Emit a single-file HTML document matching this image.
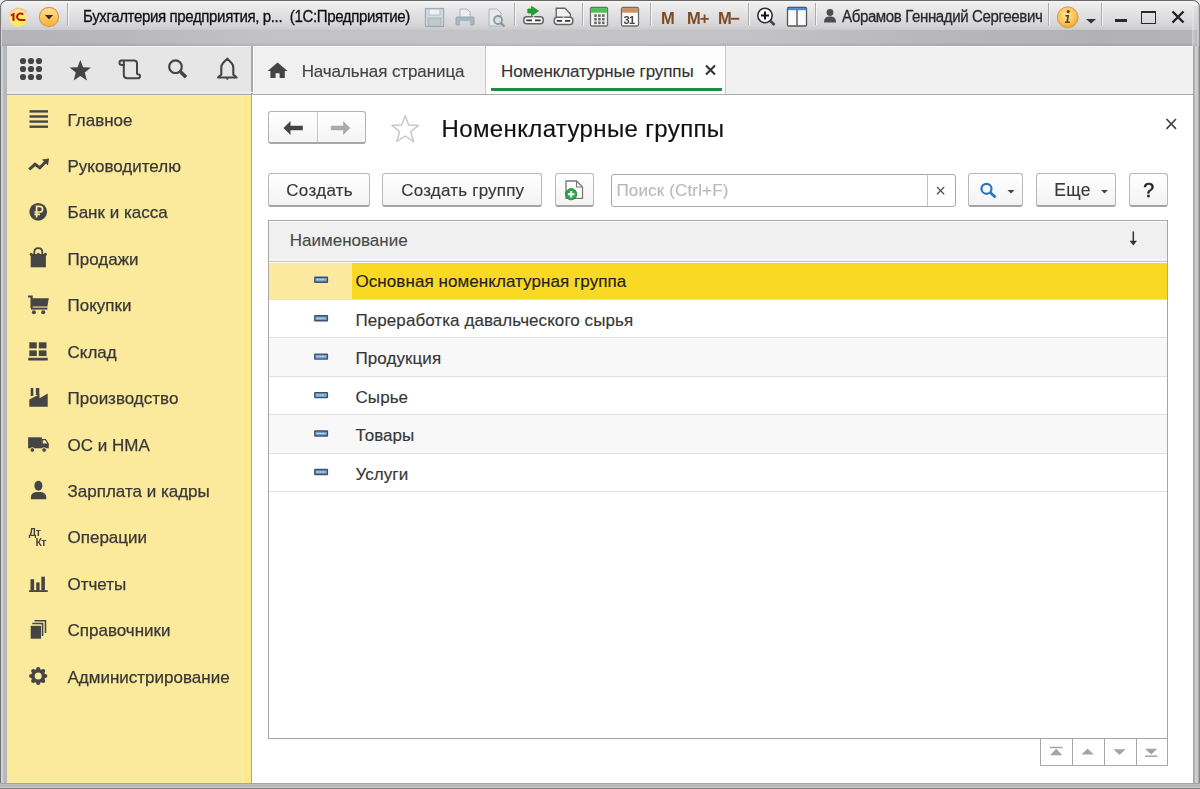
<!DOCTYPE html>
<html><head><meta charset="utf-8"><style>
html,body{margin:0;padding:0;}
body{width:1200px;height:789px;overflow:hidden;position:relative;background:#e6eee8;font-family:"Liberation Sans", sans-serif;}
.t{position:absolute;white-space:nowrap;font-family:"Liberation Sans", sans-serif;}
.b{position:absolute;box-sizing:border-box;}
.i{position:absolute;overflow:visible;}
#wrap{position:absolute;left:0;top:0;width:1200px;height:789px;overflow:hidden;filter:blur(0.4px);}
</style></head><body><div id="wrap">
<div class="b" style="left:0px;top:0px;width:1200px;height:46px;border-radius:7px 7px 0 0;border:1.2px solid #686868;border-bottom:none;background:linear-gradient(to bottom,#f6f6f6 0px,#f0f0f0 2px,#e4e4e6 11px,#d4d4d7 25px,#cacacd 29px);"></div>
<div class="b" style="left:0px;top:30px;width:1200px;height:16px;background:linear-gradient(to bottom,rgba(0,0,0,0) 0px,rgba(0,0,0,0) 13px,rgba(0,0,0,0.05) 14px,rgba(0,0,0,0.07) 16px),linear-gradient(to right,#b4b4b8 0px,#b8b8bc 120px,#c2c2c4 260px,#c4c4c6 560px,#c2c2c4 760px,#b8b8bc 920px,#b2b2b6 1100px,#b4b4b8 1200px);"></div>
<div class="b" style="left:0px;top:6px;width:2px;height:40px;background:linear-gradient(to right,#787c7e 0px,#7c8082 1px,#d4d8dc 1px,#d0d4d8 2px);"></div>
<div class="b" style="left:1192px;top:6px;width:8px;height:40px;background:linear-gradient(to right,rgba(240,240,240,0.5) 0px,rgba(220,220,220,0.4) 2px,rgba(190,190,190,0.4) 5px,rgba(215,215,215,0.8) 5.5px,#c4c4c4 6.5px,#8a8a8a 7.5px);"></div>
<div class="b" style="left:0px;top:46px;width:7px;height:743px;background:linear-gradient(to right,#6c7072 0px,#74787a 1px,#d0d4d8 1px,#cdd1d4 2.5px,#bcbcc0 3px,#b4b4b8 7px);"></div>
<div class="b" style="left:1193px;top:46px;width:7px;height:743px;background:linear-gradient(to right,#a8a8a8 0px,#b4b4b4 2px,#d0d0d0 2.5px,#c8c8c8 4.5px,#b8b8b8 5px,#a0a0a0 6px,#6a6a6a 7px);"></div>
<div class="b" style="left:0px;top:783px;width:1200px;height:6px;background:linear-gradient(to bottom,#a4a4a4 0px,#a8a8a8 1px,#bcbcbc 1.5px,#b4b4b4 2.5px,#a8a8a8 3px,#d0d0d0 4px,#c8c8c8 4.8px,#7a7a7a 5.5px);"></div>
<div class="b" style="left:7px;top:46px;width:245px;height:48px;background:#e6e6e6;border-top:1px solid #f4f4f4;"></div>
<div class="b" style="left:252px;top:46px;width:941px;height:48px;background:#f0f0f0;border-top:1px solid #f8f8f8;"></div>
<div class="b" style="left:251.4px;top:46px;width:1.3px;height:48px;background:#a8a8a8;"></div>
<div class="b" style="left:252.7px;top:47px;width:1px;height:46px;background:#fbfbfb;"></div>
<div class="b" style="left:7px;top:92px;width:1186px;height:1px;background:#f2f2f2;"></div>
<div class="b" style="left:7px;top:93.6px;width:1186px;height:1.6px;background:#acacac;"></div>
<div class="b" style="left:7px;top:95px;width:244px;height:688px;background:#fbe99c;"></div>
<div class="b" style="left:242.5px;top:95px;width:1px;height:688px;background:#f9ecb8;"></div>
<div class="b" style="left:243.5px;top:95px;width:7.5px;height:688px;background:#fde98e;"></div>
<div class="b" style="left:251px;top:95px;width:1.2px;height:688px;background:#b4ac58;"></div>
<div class="b" style="left:252.2px;top:95px;width:940.8px;height:688px;background:#ffffff;"></div>
<svg class="i" style="left:6px;top:5px" width="26" height="26" viewBox="6 5 26 26"><defs><radialGradient id="g1c" cx="0.5" cy="0.62" r="0.55"><stop offset="0" stop-color="#fff060"/><stop offset="0.55" stop-color="#ffe860"/><stop offset="0.85" stop-color="#ffe4a0"/><stop offset="1" stop-color="#f0c48a"/></radialGradient></defs>
<circle cx="18.4" cy="17.1" r="9.7" fill="url(#g1c)"/>
<path d="M10.8 14.6 L13.3 12.9 L14.6 12.9 L14.6 20.7 L12.4 20.7 L12.4 15.6 L10.8 16.5 Z" fill="#b41c10"/>
<path d="M23.2 14.6 A3.5 3.3 0 1 0 19.9 20 L25.4 20" fill="none" stroke="#b41c10" stroke-width="2.1"/></svg>
<svg class="i" style="left:38px;top:6px;" width="24" height="24" viewBox="0 0 24 24"><defs><linearGradient id="gdd" x1="0" y1="0" x2="0" y2="1"><stop offset="0" stop-color="#ffe0a0"/><stop offset="0.5" stop-color="#ffc860"/><stop offset="1" stop-color="#f6b040"/></linearGradient></defs>
<circle cx="11" cy="11" r="9.6" fill="url(#gdd)" stroke="#d89a48" stroke-width="1.1"/>
<path d="M6.8 9 L15.2 9 L11 13.6 Z" fill="#3c2c1c"/></svg>
<div class="b" style="left:67px;top:3px;width:2px;height:22px;border-left:1px solid #acacb0;border-right:1px solid #f4f4f4;"></div>
<div class="t" style="left:82.5px;top:8.9px;font-size:16px;line-height:16px;color:#111;font-weight:normal;letter-spacing:-0.4px;-webkit-text-stroke:0.3px #111;transform:scaleX(0.94);transform-origin:0 0;">Бухгалтерия предприятия, р...&nbsp;&nbsp;(1С:Предприятие)</div>
<svg class="i" style="left:424px;top:7px;" width="22" height="22" viewBox="0 0 22 22"><rect x="1.5" y="1.5" width="18" height="18" fill="#d6dde2" stroke="#9eabb4" stroke-width="1.3"/>
<rect x="5" y="2" width="11" height="6" fill="#eef1f3" stroke="#a8b4bc" stroke-width="0.8"/>
<rect x="4" y="11" width="13" height="8" fill="#c0cad0" stroke="#a0aab2" stroke-width="0.8"/></svg>
<svg class="i" style="left:454px;top:7px;" width="22" height="22" viewBox="0 0 22 22"><path d="M6 2 L13 2 L16 5 L16 11 L6 11 Z" fill="#eceff1" stroke="#a8b4bc" stroke-width="1"/>
<rect x="2" y="10" width="18" height="8" rx="1" fill="#a8b6c0" stroke="#98a6b0" stroke-width="1"/>
<rect x="6" y="14" width="10" height="5" fill="#cfd7dc"/></svg>
<svg class="i" style="left:486px;top:7px;" width="22" height="22" viewBox="0 0 22 22"><path d="M3 2 L11 2 L15 6 L15 19 L3 19 Z" fill="#e6eaed" stroke="#a8b4bc" stroke-width="1"/>
<circle cx="12" cy="13" r="4" fill="#d8e0e6" stroke="#8a969e" stroke-width="1.8"/>
<path d="M14.8 15.8 L18.5 19.5" stroke="#8a969e" stroke-width="2.4"/></svg>
<div class="b" style="left:514px;top:3px;width:2px;height:22px;border-left:1px solid #acacb0;border-right:1px solid #f4f4f4;"></div>
<svg class="i" style="left:518px;top:2px" width="60" height="28" viewBox="518 2 60 28"><path d="M527.8 9 H531.5 V6.3 L538.5 11 L531.5 15.7 V13 H527.8 Z" fill="#24a030" stroke="#1a8a26" stroke-width="0.7" stroke-linejoin="round"/><rect x="523.8" y="16.8" width="19.40000000000009" height="7.0" rx="3" fill="#fafafa" stroke="#646464" stroke-width="1.5"/>
<path d="M526.3 20.3 H532.0 M535.0 20.3 H540.7" stroke="#333" stroke-width="1.8"/>
<path d="M533.5 16.3 V18.8" stroke="#e0e0e0" stroke-width="1.6"/></svg>
<svg class="i" style="left:550px;top:2px" width="30" height="28" viewBox="550 2 30 28"><path d="M556.2 8.2 H565 L570.4 14 V18 H556.2 Z" fill="#f2f2f2" stroke="#666" stroke-width="1.4"/><rect x="554.3" y="17.2" width="18.5" height="7.400000000000002" rx="3" fill="#fafafa" stroke="#646464" stroke-width="1.5"/>
<path d="M556.8 20.9 H562.05 M565.05 20.9 H570.3" stroke="#333" stroke-width="1.8"/>
<path d="M563.55 16.7 V19.2" stroke="#e0e0e0" stroke-width="1.6"/></svg>
<div class="b" style="left:582px;top:3px;width:2px;height:22px;border-left:1px solid #acacb0;border-right:1px solid #f4f4f4;"></div>
<svg class="i" style="left:589px;top:6px;" width="20" height="22" viewBox="0 0 20 22"><rect x="1.5" y="1.5" width="17" height="18.5" rx="1.2" fill="#f2f6f4" stroke="#6e6e6e" stroke-width="1.3"/>
<rect x="2.1" y="2.1" width="15.8" height="4.6" fill="#4cc254"/>
<rect x="5.2" y="8.3" width="2.6" height="2.6" fill="#6c6c6c"/><rect x="5.2" y="11.9" width="2.6" height="2.6" fill="#6c6c6c"/><rect x="5.2" y="15.5" width="2.6" height="2.6" fill="#6c6c6c"/><rect x="9.1" y="8.3" width="2.6" height="2.6" fill="#6c6c6c"/><rect x="9.1" y="11.9" width="2.6" height="2.6" fill="#6c6c6c"/><rect x="9.1" y="15.5" width="2.6" height="2.6" fill="#6c6c6c"/><rect x="13.0" y="8.3" width="2.6" height="2.6" fill="#6c6c6c"/><rect x="13.0" y="11.9" width="2.6" height="2.6" fill="#6c6c6c"/><rect x="13.0" y="15.5" width="2.6" height="2.6" fill="#6c6c6c"/></svg>
<svg class="i" style="left:620px;top:6px;" width="22" height="22" viewBox="0 0 22 22"><rect x="1.5" y="1.5" width="17" height="18.5" rx="1.5" fill="#fbfbfb" stroke="#6e6e6e" stroke-width="1.3"/>
<rect x="2.1" y="2.1" width="15.8" height="4.6" fill="#cf9060"/>
<text x="3.4" y="17.8" font-family="Liberation Sans" font-weight="bold" font-size="11" fill="#444" letter-spacing="-0.5">31</text></svg>
<div class="b" style="left:650px;top:3px;width:2px;height:22px;border-left:1px solid #acacb0;border-right:1px solid #f4f4f4;"></div>
<div class="t" style="left:661.0px;top:9.6px;font-size:16.5px;line-height:16.5px;color:#7c4a22;font-weight:bold;letter-spacing:0px;">M</div>
<div class="t" style="left:687.0px;top:9.6px;font-size:16.5px;line-height:16.5px;color:#7c4a22;font-weight:bold;letter-spacing:-1px;">M+</div>
<div class="t" style="left:718.0px;top:9.6px;font-size:16.5px;line-height:16.5px;color:#7c4a22;font-weight:bold;letter-spacing:-1.5px;">M−</div>
<div class="b" style="left:748px;top:3px;width:2px;height:22px;border-left:1px solid #acacb0;border-right:1px solid #f4f4f4;"></div>
<svg class="i" style="left:756px;top:6px;" width="22" height="22" viewBox="0 0 22 22"><circle cx="9" cy="9.5" r="7.2" fill="#fafafa" stroke="#333" stroke-width="1.6"/>
<path d="M9 5.5 V13.5 M5 9.5 H13" stroke="#111" stroke-width="2"/>
<path d="M14 14.5 L18.5 19" stroke="#444" stroke-width="2.6"/></svg>
<svg class="i" style="left:786px;top:6px;" width="22" height="22" viewBox="0 0 22 22"><rect x="1.5" y="1.5" width="19" height="18.5" rx="1" fill="#fafafa" stroke="#555" stroke-width="1.3"/>
<rect x="2" y="2" width="18" height="2.2" fill="#4a90d8"/>
<path d="M11 4 V19.5" stroke="#555" stroke-width="1.4"/></svg>
<div class="b" style="left:815px;top:3px;width:2px;height:22px;border-left:1px solid #acacb0;border-right:1px solid #f4f4f4;"></div>
<svg class="i" style="left:823px;top:8px;" width="16" height="16" viewBox="0 0 16 16"><circle cx="7" cy="4.5" r="3.4" fill="#4e4e4e"/>
<path d="M1 14.5 C1 9.5 3.5 8.5 7 8.5 C10.5 8.5 13 9.5 13 14.5 Z" fill="#4e4e4e"/></svg>
<div class="t" style="left:842.3px;top:8.6px;font-size:16px;line-height:16px;color:#2a2a2a;font-weight:normal;letter-spacing:-0.4px;-webkit-text-stroke:0.3px #2a2a2a;transform:scaleX(0.94);transform-origin:0 0;">Абрамов Геннадий Сергеевич</div>
<div class="b" style="left:1048px;top:3px;width:2px;height:22px;border-left:1px solid #acacb0;border-right:1px solid #f4f4f4;"></div>
<svg class="i" style="left:1055px;top:5px;" width="26" height="26" viewBox="0 0 26 26"><defs><radialGradient id="ginf" cx="0.45" cy="0.4" r="0.6"><stop offset="0" stop-color="#ffe6a0"/><stop offset="0.6" stop-color="#fcc85c"/><stop offset="1" stop-color="#eaa838"/></radialGradient></defs>
<circle cx="12.7" cy="12.3" r="10.4" fill="url(#ginf)" stroke="#d89c40" stroke-width="1"/>
<circle cx="13.2" cy="6.6" r="1.6" fill="#5a4020"/>
<path d="M10.5 10 L14.2 10 L13 16.5 L15.2 16.5 L14.8 18 L9.8 18 L10.2 16.5 L11.4 16.5 L12.2 11.5 L10.3 11.5 Z" fill="#5a4020"/></svg>
<svg class="i" style="left:1085px;top:18px;" width="12" height="7" viewBox="0 0 12 7"><path d="M1 1 L11 1 L6 5.5 Z" fill="#333"/></svg>
<div class="b" style="left:1101px;top:3px;width:2px;height:22px;border-left:1px solid #acacb0;border-right:1px solid #f4f4f4;"></div>
<div class="b" style="left:1114.5px;top:19.3px;width:12.8px;height:3.2px;background:#2a2a2a;"></div>
<div class="b" style="left:1141.2px;top:10.7px;width:14.8px;height:13.3px;border:1.5px solid #2a2a2a;border-top-width:2.6px;"></div>
<svg class="i" style="left:1171px;top:10px;" width="14" height="14" viewBox="0 0 14 14"><path d="M1.5 1.5 L12.5 12.5 M12.5 1.5 L1.5 12.5" stroke="#222" stroke-width="2.4"/></svg>
<svg class="i" style="left:16px;top:54px" width="32" height="32" viewBox="16 54 32 32"><circle cx="23" cy="61" r="3.1" fill="#444"/><circle cx="23" cy="69" r="3.1" fill="#444"/><circle cx="23" cy="77" r="3.1" fill="#444"/><circle cx="31" cy="61" r="3.1" fill="#444"/><circle cx="31" cy="69" r="3.1" fill="#444"/><circle cx="31" cy="77" r="3.1" fill="#444"/><circle cx="39" cy="61" r="3.1" fill="#444"/><circle cx="39" cy="69" r="3.1" fill="#444"/><circle cx="39" cy="77" r="3.1" fill="#444"/></svg>
<svg class="i" style="left:64px;top:54px" width="32" height="32" viewBox="64 54 32 32"><path d="M80.3 59.9 L83.1 67.3 L90.9 67.6 L84.8 72.4 L86.9 80.4 L80.3 75.9 L73.7 80.4 L75.8 72.4 L69.6 67.6 L77.5 67.3 Z" fill="#444"/></svg>
<svg class="i" style="left:114px;top:54px" width="32" height="32" viewBox="114 54 32 32"><path d="M121.5 60.5 H134 Q137 60.5 137 63.5 V74.5 M121.5 60.5 Q119.5 60.5 119.5 62.7 Q119.5 65 121.8 65 H123.8 V74.5 Q123.8 78.3 127.5 78.3 H137.8 Q140 78.3 140 76.2 Q140 74.2 137.8 74.2 H137" fill="none" stroke="#444" stroke-width="2"/>
<path d="M123.8 65 V61" stroke="#444" stroke-width="2"/></svg>
<svg class="i" style="left:164px;top:54px" width="32" height="32" viewBox="164 54 32 32"><circle cx="175.5" cy="66.7" r="6.3" fill="none" stroke="#444" stroke-width="2.2"/><path d="M180.5 71.8 L186 77.3" stroke="#444" stroke-width="3.6"/></svg>
<svg class="i" style="left:212px;top:54px" width="32" height="32" viewBox="212 54 32 32"><path d="M227.3 58.6 L231.5 63 Q233.3 65 233.3 67.5 V74.4 L236.6 77.5 H218 L221.3 74.4 V67.5 Q221.3 65 223.1 63 Z" fill="none" stroke="#444" stroke-width="2.1" stroke-linejoin="round"/><path d="M225.3 78.2 H229.3 L227.3 80 Z" fill="#444"/></svg>
<svg class="i" style="left:264px;top:58px" width="28" height="24" viewBox="264 58 28 24"><path d="M277.6 62.5 L287.6 71 L284.8 71 L284.8 78 L279.6 78 L279.6 73.2 L275.6 73.2 L275.6 78 L270.4 78 L270.4 71 L267.6 71 Z" fill="#444"/></svg>
<div class="t" style="left:301.7px;top:63.0px;font-size:17px;line-height:17px;color:#444;font-weight:normal;letter-spacing:-0.1px;-webkit-text-stroke:0.15px #444;">Начальная страница</div>
<div class="b" style="left:485px;top:46px;width:1px;height:48px;background:#c8c8c8;"></div>
<div class="b" style="left:486px;top:46px;width:240px;height:48px;background:#fdfdfd;border-right:1px solid #c8c8c8;"></div>
<div class="b" style="left:490.5px;top:88.4px;width:231px;height:2.8px;background:#1c8c3e;"></div>
<div class="t" style="left:501.0px;top:63.1px;font-size:17px;line-height:17px;color:#333;font-weight:normal;letter-spacing:-0.12px;-webkit-text-stroke:0.15px #333;">Номенклатурные группы</div>
<svg class="i" style="left:700px;top:60px" width="20" height="20" viewBox="700 60 20 20"><path d="M706 65.6 L715 74.4 M715 65.6 L706 74.4" stroke="#333" stroke-width="2.1"/></svg>
<div class="t" style="left:67.5px;top:111.6px;font-size:17px;line-height:17px;color:#383838;font-weight:normal;letter-spacing:0px;-webkit-text-stroke:0.25px #383838;">Главное</div>
<div class="t" style="left:67.5px;top:158.0px;font-size:17px;line-height:17px;color:#383838;font-weight:normal;letter-spacing:0px;-webkit-text-stroke:0.25px #383838;">Руководителю</div>
<div class="t" style="left:67.5px;top:204.4px;font-size:17px;line-height:17px;color:#383838;font-weight:normal;letter-spacing:0px;-webkit-text-stroke:0.25px #383838;">Банк и касса</div>
<div class="t" style="left:67.5px;top:250.9px;font-size:17px;line-height:17px;color:#383838;font-weight:normal;letter-spacing:0px;-webkit-text-stroke:0.25px #383838;">Продажи</div>
<div class="t" style="left:67.5px;top:297.3px;font-size:17px;line-height:17px;color:#383838;font-weight:normal;letter-spacing:0px;-webkit-text-stroke:0.25px #383838;">Покупки</div>
<div class="t" style="left:67.5px;top:343.7px;font-size:17px;line-height:17px;color:#383838;font-weight:normal;letter-spacing:0px;-webkit-text-stroke:0.25px #383838;">Склад</div>
<div class="t" style="left:67.5px;top:390.1px;font-size:17px;line-height:17px;color:#383838;font-weight:normal;letter-spacing:0px;-webkit-text-stroke:0.25px #383838;">Производство</div>
<div class="t" style="left:67.5px;top:436.5px;font-size:17px;line-height:17px;color:#383838;font-weight:normal;letter-spacing:0px;-webkit-text-stroke:0.25px #383838;">ОС и НМА</div>
<div class="t" style="left:67.5px;top:483.0px;font-size:17px;line-height:17px;color:#383838;font-weight:normal;letter-spacing:0px;-webkit-text-stroke:0.25px #383838;">Зарплата и кадры</div>
<div class="t" style="left:67.5px;top:529.4px;font-size:17px;line-height:17px;color:#383838;font-weight:normal;letter-spacing:0px;-webkit-text-stroke:0.25px #383838;">Операции</div>
<div class="t" style="left:67.5px;top:575.8px;font-size:17px;line-height:17px;color:#383838;font-weight:normal;letter-spacing:0px;-webkit-text-stroke:0.25px #383838;">Отчеты</div>
<div class="t" style="left:67.5px;top:622.2px;font-size:17px;line-height:17px;color:#383838;font-weight:normal;letter-spacing:0px;-webkit-text-stroke:0.25px #383838;">Справочники</div>
<div class="t" style="left:67.5px;top:668.6px;font-size:17px;line-height:17px;color:#383838;font-weight:normal;letter-spacing:0px;-webkit-text-stroke:0.25px #383838;">Администрирование</div>
<svg class="i" style="left:24px;top:104px" width="30" height="30" viewBox="24 104 30 30"><rect x="29.5" y="110.2" width="18.5" height="2.4" fill="#454545"/><rect x="29.5" y="115.3" width="18.5" height="2.4" fill="#454545"/><rect x="29.5" y="120.4" width="18.5" height="2.4" fill="#454545"/><rect x="29.5" y="125.5" width="18.5" height="2.4" fill="#454545"/></svg>
<svg class="i" style="left:24px;top:150px" width="32" height="32" viewBox="24 150 32 32"><path d="M29.2 169.5 L35 164.3 L39.8 167.8 L45.5 162" fill="none" stroke="#454545" stroke-width="3"/><path d="M42 159.5 L49 158.5 L48 165.5 Z" fill="#454545"/></svg>
<svg class="i" style="left:24px;top:196px" width="32" height="32" viewBox="24 196 32 32"><circle cx="38.2" cy="211.8" r="8.9" fill="#454545"/><path d="M36.6 217.6 V206.4 H39.6 Q42.6 206.4 42.6 209.2 Q42.6 212 39.6 212 H34.4 M34.4 214.4 H40" fill="none" stroke="#fbe99c" stroke-width="1.7"/></svg>
<svg class="i" style="left:24px;top:243px" width="32" height="32" viewBox="24 243 32 32"><path d="M30.7 254 H45.9 V267.3 H30.7 Z" fill="#454545"/><path d="M34.3 255 V252 Q34.3 248.2 38.3 248.2 Q42.3 248.2 42.3 252 V255" fill="none" stroke="#454545" stroke-width="1.8"/><circle cx="31.2" cy="254.2" r="1.5" fill="#454545"/><circle cx="38.3" cy="254.2" r="1.5" fill="#454545"/><circle cx="45.4" cy="254.2" r="1.5" fill="#454545"/></svg>
<svg class="i" style="left:24px;top:289px" width="32" height="32" viewBox="24 289 32 32"><path d="M28 296.5 H31.6 V308" fill="none" stroke="#454545" stroke-width="2.2"/><path d="M31.6 298.3 H48.8 L47.4 306.4 H31.6 Z" fill="#454545"/><rect x="31" y="307.6" width="16.4" height="2" fill="#454545"/><circle cx="33.9" cy="312.3" r="2" fill="#454545"/><circle cx="43.2" cy="312.3" r="2" fill="#454545"/></svg>
<svg class="i" style="left:24px;top:335px" width="32" height="32" viewBox="24 335 32 32"><rect x="29.3" y="342.3" width="7.5" height="6.1" fill="#454545"/><rect x="38.8" y="342.3" width="7.7" height="6.1" fill="#454545"/><rect x="29.3" y="350.4" width="7.5" height="5.7" fill="#454545"/><rect x="38.8" y="350.4" width="7.7" height="5.7" fill="#454545"/><rect x="28.2" y="357.8" width="19.6" height="2.7" fill="#454545"/></svg>
<svg class="i" style="left:24px;top:382px" width="32" height="32" viewBox="24 382 32 32"><rect x="30.7" y="388" width="2.6" height="8" fill="#454545"/><rect x="35.9" y="388" width="3.4" height="7" fill="#454545"/><path d="M29.3 399.5 L39.5 394.2 V398.2 L47.7 393.5 V406.7 H29.3 Z" fill="#454545"/></svg>
<svg class="i" style="left:24px;top:428px" width="32" height="32" viewBox="24 428 32 32"><path d="M28.1 437.3 H41.9 V448.3 H28.1 Z" fill="#454545"/><path d="M41.9 439 H45.8 L48.8 443.6 V448.3 H41.9 Z" fill="#454545"/><path d="M42.8 440.3 H45.2 L47.2 443.4 H42.8 Z" fill="#fbe99c"/><circle cx="32.3" cy="450" r="2.3" fill="#454545" stroke="#fbe99c" stroke-width="0.9"/><circle cx="44.1" cy="450" r="2.3" fill="#454545" stroke="#fbe99c" stroke-width="0.9"/></svg>
<svg class="i" style="left:24px;top:475px" width="32" height="32" viewBox="24 475 32 32"><ellipse cx="38.4" cy="485.8" rx="4" ry="5" fill="#454545"/><path d="M30.9 499.3 V497.5 Q30.9 492.5 36.3 492 H40.6 Q46.3 492.5 46.3 497.5 V499.3 Z" fill="#454545"/></svg>
<svg class="i" style="left:24px;top:521px" width="32" height="32" viewBox="24 521 32 32"><text x="28.8" y="536.4" font-family="Liberation Sans" font-weight="bold" font-size="10.5" fill="#454545" letter-spacing="-0.5">Дт</text><text x="35.4" y="545.8" font-family="Liberation Sans" font-weight="bold" font-size="10.5" fill="#454545" letter-spacing="-0.5">Кт</text></svg>
<svg class="i" style="left:24px;top:567px" width="32" height="32" viewBox="24 567 32 32"><rect x="30.5" y="579.2" width="3.6" height="11.5" fill="#454545"/><rect x="36.2" y="582.4" width="3.4" height="8.3" fill="#454545"/><rect x="41.3" y="576.7" width="3.6" height="14" fill="#454545"/><rect x="29.1" y="590.2" width="18.6" height="1.8" fill="#454545"/></svg>
<svg class="i" style="left:24px;top:614px" width="32" height="32" viewBox="24 614 32 32"><rect x="30.7" y="625.8" width="10.4" height="12.9" fill="#454545"/><path d="M32.3 623.4 H42.6 V636" fill="none" stroke="#454545" stroke-width="1.5"/><path d="M34.5 620.8 H45.5 V633" fill="none" stroke="#454545" stroke-width="1.5"/></svg>
<svg class="i" style="left:24px;top:660px" width="32" height="32" viewBox="24 660 32 32"><circle cx="45.20" cy="676.00" r="2.1" fill="#454545"/><circle cx="43.15" cy="680.95" r="2.1" fill="#454545"/><circle cx="38.20" cy="683.00" r="2.1" fill="#454545"/><circle cx="33.25" cy="680.95" r="2.1" fill="#454545"/><circle cx="31.20" cy="676.00" r="2.1" fill="#454545"/><circle cx="33.25" cy="671.05" r="2.1" fill="#454545"/><circle cx="38.20" cy="669.00" r="2.1" fill="#454545"/><circle cx="43.15" cy="671.05" r="2.1" fill="#454545"/><circle cx="38.2" cy="676" r="5.3" fill="none" stroke="#454545" stroke-width="3.6"/></svg>
<div class="b" style="left:268px;top:111px;width:98px;height:33px;border:1px solid #b4b4b4;border-bottom:2px solid #a8a8a8;border-radius:3px;background:linear-gradient(#ffffff,#f4f4f4);"></div>
<div class="b" style="left:317px;top:112px;width:1px;height:30px;background:#c8c8c8;"></div>
<svg class="i" style="left:280px;top:115px" width="30" height="25" viewBox="280 115 30 25"><path d="M283.5 128 L290.5 121 V125.8 H302.8 V130.2 H290.5 V135 Z" fill="#444"/></svg>
<svg class="i" style="left:328px;top:115px" width="30" height="25" viewBox="328 115 30 25"><path d="M350.2 128 L343.2 121 V125.8 H330.8 V130.2 H343.2 V135 Z" fill="#aaaaaa"/></svg>
<svg class="i" style="left:386px;top:112px" width="38" height="34" viewBox="386 112 38 34"><path d="M405.2 115.8 L408.7 125 L418.5 125.4 L410.8 131.5 L413.5 141.5 L405.2 136 L396.9 141.5 L399.6 131.5 L391.9 125.4 L401.7 125 Z" fill="none" stroke="#c4c4c4" stroke-width="1.4" stroke-linejoin="round"/></svg>
<div class="t" style="left:441.6px;top:117.3px;font-size:24px;line-height:24px;color:#111;font-weight:normal;letter-spacing:0.36px;-webkit-text-stroke:0.15px #111;">Номенклатурные группы</div>
<svg class="i" style="left:1162px;top:114px" width="20" height="20" viewBox="1162 114 20 20"><path d="M1166.5 119 L1176 128.8 M1176 119 L1166.5 128.8" stroke="#444" stroke-width="1.7"/></svg>
<div class="b" style="left:268px;top:173px;width:102px;height:34px;border:1px solid #b8b8b8;border-bottom:2px solid #a4a4a4;border-radius:3px;background:linear-gradient(#ffffff,#f3f3f3);"></div>
<div class="t" style="left:286.3px;top:182.3px;font-size:17px;line-height:17px;color:#383838;font-weight:normal;letter-spacing:0.3px;-webkit-text-stroke:0.15px #383838;">Создать</div>
<div class="b" style="left:382px;top:173px;width:160px;height:34px;border:1px solid #b8b8b8;border-bottom:2px solid #a4a4a4;border-radius:3px;background:linear-gradient(#ffffff,#f3f3f3);"></div>
<div class="t" style="left:401.3px;top:182.3px;font-size:17px;line-height:17px;color:#383838;font-weight:normal;letter-spacing:0.2px;-webkit-text-stroke:0.15px #383838;">Создать группу</div>
<div class="b" style="left:555px;top:173px;width:38.5px;height:34px;border:1px solid #b8b8b8;border-bottom:2px solid #a4a4a4;border-radius:3px;background:linear-gradient(#ffffff,#f3f3f3);"></div>
<svg class="i" style="left:560px;top:176px" width="30" height="28" viewBox="560 176 30 28"><path d="M566 181 H576.5 L582.5 187 V198.3 H566 Z" fill="#fff" stroke="#777" stroke-width="1.3"/><path d="M576.5 181 V187 H582.5" fill="none" stroke="#777" stroke-width="1.1"/><circle cx="571.2" cy="194.2" r="5.6" fill="#2aa84a" stroke="#1c7f36" stroke-width="0.8"/><path d="M571.2 190.9 V197.5 M567.9 194.2 H574.5" stroke="#fff" stroke-width="1.9"/></svg>
<div class="b" style="left:611px;top:173.5px;width:345px;height:33px;border:1px solid #a8a8a8;border-radius:3px;background:#fff;"></div>
<div class="b" style="left:927px;top:174px;width:1px;height:32px;background:#c4c4c4;"></div>
<div class="t" style="left:616.5px;top:182.3px;font-size:17px;line-height:17px;color:#bababa;font-weight:normal;letter-spacing:0.15px;-webkit-text-stroke:0.15px #bababa;">Поиск (Ctrl+F)</div>
<svg class="i" style="left:932px;top:182px" width="18" height="18" viewBox="932 182 18 18"><path d="M937 187 L944.2 194.2 M944.2 187 L937 194.2" stroke="#555" stroke-width="1.3"/></svg>
<div class="b" style="left:968px;top:173px;width:55px;height:34px;border:1px solid #b8b8b8;border-bottom:2px solid #a4a4a4;border-radius:3px;background:linear-gradient(#ffffff,#f3f3f3);"></div>
<svg class="i" style="left:975px;top:178px" width="26" height="26" viewBox="975 178 26 26"><circle cx="986.5" cy="188.8" r="5" fill="none" stroke="#2b74c4" stroke-width="2.2"/><path d="M990.2 192.5 L995.5 197.3" stroke="#2b74c4" stroke-width="2.8"/></svg>
<svg class="i" style="left:1004px;top:186px" width="14" height="10" viewBox="1004 186 14 10"><path d="M1007.5 190 L1014.5 190 L1011 193.5 Z" fill="#444"/></svg>
<div class="b" style="left:1036px;top:173px;width:80px;height:34px;border:1px solid #b8b8b8;border-bottom:2px solid #a4a4a4;border-radius:3px;background:linear-gradient(#ffffff,#f3f3f3);"></div>
<div class="t" style="left:1054.3px;top:181.7px;font-size:17.5px;line-height:17.5px;color:#3a3a3a;font-weight:normal;letter-spacing:0.35px;-webkit-text-stroke:0.15px #3a3a3a;">Еще</div>
<svg class="i" style="left:1098px;top:186px" width="14" height="10" viewBox="1098 186 14 10"><path d="M1101 190 L1108 190 L1104.5 193.5 Z" fill="#444"/></svg>
<div class="b" style="left:1128.5px;top:173px;width:39px;height:34px;border:1px solid #b8b8b8;border-bottom:2px solid #a4a4a4;border-radius:3px;background:linear-gradient(#ffffff,#f3f3f3);"></div>
<div class="t" style="left:1143.2px;top:180.7px;font-size:19.5px;line-height:19.5px;color:#222;font-weight:normal;letter-spacing:0px;-webkit-text-stroke:0.5px #222;">?</div>
<div class="b" style="left:268px;top:220px;width:900px;height:518.5px;border:1px solid #a6a6a6;background:#fff;"></div>
<div class="b" style="left:269px;top:221px;width:898px;height:40px;background:#f0f0f0;border-top:1px solid #fcfcfc;"></div>
<div class="b" style="left:269px;top:258.5px;width:898px;height:1px;background:#fafafa;"></div>
<div class="b" style="left:269px;top:260.8px;width:898px;height:1.2px;background:#c8c8c8;"></div>
<div class="b" style="left:269px;top:262px;width:898px;height:1px;background:#ffffff;"></div>
<div class="t" style="left:289.8px;top:232.3px;font-size:17px;line-height:17px;color:#4a4a4a;font-weight:normal;letter-spacing:0px;-webkit-text-stroke:0.15px #4a4a4a;">Наименование</div>
<svg class="i" style="left:1126px;top:228px" width="14" height="20" viewBox="1126 228 14 20"><path d="M1133.3 231.5 V243" stroke="#333" stroke-width="1.5"/><path d="M1129.6 240.8 H1137 L1133.3 245.5 Z" fill="#333"/></svg>
<div class="b" style="left:269px;top:263px;width:83px;height:36.0px;background:#fbe9a0;"></div>
<div class="b" style="left:352px;top:263px;width:815px;height:36.0px;background:#f9d923;"></div>
<div class="b" style="left:269px;top:299.0px;width:898px;height:1px;background:#e0e0e0;"></div>
<svg class="i" style="left:310px;top:273px" width="22" height="12" viewBox="310 273 22 12"><rect x="314.8" y="277.2" width="12.6" height="5" rx="0.3" fill="#76a0c6" stroke="#3a5270" stroke-width="1.4"/><path d="M316.6 279.7 H325.6" stroke="#d4e6f4" stroke-width="1" stroke-dasharray="2 0.8"/></svg>
<div class="t" style="left:355.5px;top:273.4px;font-size:17px;line-height:17px;color:#222;font-weight:normal;letter-spacing:0.07px;-webkit-text-stroke:0.15px #222;">Основная номенклатурная группа</div>
<div class="b" style="left:269px;top:300.0px;width:898px;height:37.44999999999999px;background:#ffffff;"></div>
<div class="b" style="left:269px;top:337.45px;width:898px;height:1px;background:#e0e0e0;"></div>
<svg class="i" style="left:310px;top:312px" width="22" height="12" viewBox="310 312 22 12"><rect x="314.8" y="315.7" width="12.6" height="5" rx="0.3" fill="#76a0c6" stroke="#3a5270" stroke-width="1.4"/><path d="M316.6 318.2 H325.6" stroke="#d4e6f4" stroke-width="1" stroke-dasharray="2 0.8"/></svg>
<div class="t" style="left:355.5px;top:311.9px;font-size:17px;line-height:17px;color:#363636;font-weight:normal;letter-spacing:0.07px;-webkit-text-stroke:0.15px #363636;">Переработка давальческого сырья</div>
<div class="b" style="left:269px;top:338.45px;width:898px;height:37.44999999999999px;background:#f8f8f8;"></div>
<div class="b" style="left:269px;top:375.9px;width:898px;height:1px;background:#e0e0e0;"></div>
<svg class="i" style="left:310px;top:350px" width="22" height="12" viewBox="310 350 22 12"><rect x="314.8" y="354.1" width="12.6" height="5" rx="0.3" fill="#76a0c6" stroke="#3a5270" stroke-width="1.4"/><path d="M316.6 356.6 H325.6" stroke="#d4e6f4" stroke-width="1" stroke-dasharray="2 0.8"/></svg>
<div class="t" style="left:355.5px;top:350.3px;font-size:17px;line-height:17px;color:#363636;font-weight:normal;letter-spacing:0.07px;-webkit-text-stroke:0.15px #363636;">Продукция</div>
<div class="b" style="left:269px;top:376.9px;width:898px;height:37.450000000000045px;background:#ffffff;"></div>
<div class="b" style="left:269px;top:414.35px;width:898px;height:1px;background:#e0e0e0;"></div>
<svg class="i" style="left:310px;top:388px" width="22" height="12" viewBox="310 388 22 12"><rect x="314.8" y="392.6" width="12.6" height="5" rx="0.3" fill="#76a0c6" stroke="#3a5270" stroke-width="1.4"/><path d="M316.6 395.1 H325.6" stroke="#d4e6f4" stroke-width="1" stroke-dasharray="2 0.8"/></svg>
<div class="t" style="left:355.5px;top:388.8px;font-size:17px;line-height:17px;color:#363636;font-weight:normal;letter-spacing:0.07px;-webkit-text-stroke:0.15px #363636;">Сырье</div>
<div class="b" style="left:269px;top:415.35px;width:898px;height:37.44999999999999px;background:#f8f8f8;"></div>
<div class="b" style="left:269px;top:452.8px;width:898px;height:1px;background:#e0e0e0;"></div>
<svg class="i" style="left:310px;top:427px" width="22" height="12" viewBox="310 427 22 12"><rect x="314.8" y="431.0" width="12.6" height="5" rx="0.3" fill="#76a0c6" stroke="#3a5270" stroke-width="1.4"/><path d="M316.6 433.5 H325.6" stroke="#d4e6f4" stroke-width="1" stroke-dasharray="2 0.8"/></svg>
<div class="t" style="left:355.5px;top:427.2px;font-size:17px;line-height:17px;color:#363636;font-weight:normal;letter-spacing:0.07px;-webkit-text-stroke:0.15px #363636;">Товары</div>
<div class="b" style="left:269px;top:453.8px;width:898px;height:37.44999999999999px;background:#ffffff;"></div>
<div class="b" style="left:269px;top:491.25px;width:898px;height:1px;background:#e0e0e0;"></div>
<svg class="i" style="left:310px;top:465px" width="22" height="12" viewBox="310 465 22 12"><rect x="314.8" y="469.5" width="12.6" height="5" rx="0.3" fill="#76a0c6" stroke="#3a5270" stroke-width="1.4"/><path d="M316.6 472.0 H325.6" stroke="#d4e6f4" stroke-width="1" stroke-dasharray="2 0.8"/></svg>
<div class="t" style="left:355.5px;top:465.7px;font-size:17px;line-height:17px;color:#363636;font-weight:normal;letter-spacing:0.07px;-webkit-text-stroke:0.15px #363636;">Услуги</div>
<div class="b" style="left:1040px;top:738.5px;width:128px;height:27.5px;border:1px solid #a8a8a8;border-top:none;background:#fff;"></div>
<div class="b" style="left:1072px;top:738.5px;width:1px;height:27.5px;background:#a8a8a8;"></div>
<div class="b" style="left:1103.5px;top:738.5px;width:1px;height:27.5px;background:#a8a8a8;"></div>
<div class="b" style="left:1135.5px;top:738.5px;width:1px;height:27.5px;background:#a8a8a8;"></div>
<svg class="i" style="left:1044px;top:740px" width="26" height="22" viewBox="1044 740 26 22"><path d="M1050 747.5 H1062.5" stroke="#a4a4a4" stroke-width="1.5"/><path d="M1056.2 748.8 L1062.3 755.2 H1050.1 Z" fill="#a4a4a4"/></svg>
<svg class="i" style="left:1076px;top:740px" width="26" height="22" viewBox="1076 740 26 22"><path d="M1087.6 748.5 L1093.8 754.6 H1081.4 Z" fill="#a4a4a4"/></svg>
<svg class="i" style="left:1108px;top:740px" width="26" height="22" viewBox="1108 740 26 22"><path d="M1113.4 749.2 H1125.6 L1119.5 755 Z" fill="#a4a4a4"/></svg>
<svg class="i" style="left:1140px;top:740px" width="26" height="22" viewBox="1140 740 26 22"><path d="M1145 748.7 H1157.3 L1151.2 754.5 Z" fill="#a4a4a4"/><path d="M1145 756.2 H1157.3" stroke="#a4a4a4" stroke-width="1.5"/></svg>
</div></body></html>
